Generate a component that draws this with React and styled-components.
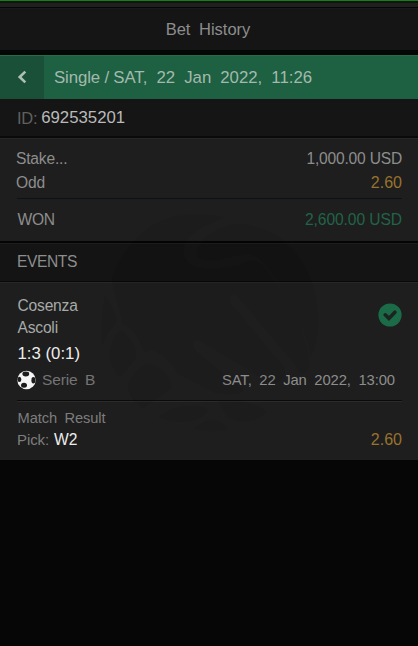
import React from "react";
import styled, { createGlobalStyle } from "styled-components";

const GlobalStyle = createGlobalStyle`
  * { box-sizing: border-box; }
  html, body { margin: 0; background: #070606; }
`;

const Page = styled.main`
  position: relative;
  display: flex;
  flex-direction: column;
  width: 100%;
  height: 646px;
  overflow: hidden;
  background: #070606;
  font-family: "Liberation Sans", Arial, sans-serif;
`;

const TopStrip = styled.div`
  flex: none;
  height: 8px;
  background: #1f1f1f;
  border-top: 1px solid #168016;
  border-bottom: 1px solid #060606;
  box-shadow: inset 0 2px 0 #111411;
`;

const Title = styled.header`
  flex: none;
  display: flex;
  justify-content: center;
  height: 47px;
  padding: 0 2px 1px 0;
  align-items: center;
  background: #151515;
  border-top: 1px solid #1a1a1a;
  border-bottom: 5px solid #040706;
`;

const Banner = styled.div`
  flex: none;
  display: flex;
  height: 44px;
  background: #1d6042;
  border-top: 1px solid #2b694e;
`;

const BackButton = styled.button`
  display: flex;
  align-items: center;
  justify-content: center;
  width: 44px;
  height: 43px;
  padding: 0 0 2px;
  border: 0;
  background: #1b5038;
`;

const BannerText = styled.div`
  display: flex;
  align-items: center;
  padding: 1px 0 0 10px;
`;

const IdBar = styled.div`
  flex: none;
  display: flex;
  align-items: center;
  gap: 4px;
  height: 39px;
  padding: 1px 17px 0;
  background: #151515;
  border-bottom: 2px solid #0a0a0a;
`;

const Card = styled.section`
  flex: none;
  height: ${(p) => p.$height}px;
  padding: 0 16px;
  background: #1e1e1e;
  border-top: 1px solid #282828;
`;

const SectionTitle = styled.div`
  flex: none;
  display: flex;
  align-items: center;
  height: 41px;
  padding: 0 17px;
  background: #141414;
  border-top: 2px solid #050505;
  border-bottom: 1px solid #080808;
  box-shadow: inset 0 1px 0 #1d1d1d;
`;

const Row = styled.div`
  display: flex;
  align-items: center;
  justify-content: space-between;
  height: ${(p) => p.$height}px;
  margin-top: ${(p) => p.$top || 0}px;
  padding-left: ${(p) => p.$inset || 0}px;
  padding-right: ${(p) => p.$right || 0}px;
`;

const Group = styled.div`
  display: flex;
  align-items: center;
  gap: ${(p) => p.$gap || 0}px;
`;

const StatusSlot = styled.div`
  display: flex;
  padding-bottom: 4px;
`;

const Rule = styled.hr`
  height: ${(p) => (p.$ridge ? 2 : 1)}px;
  margin: ${(p) => p.$top}px 0 0 1px;
  border: 0;
  background: ${(p) => (p.$ridge ? "linear-gradient(#0b0b0b 50%, #2b2b2b 50%)" : "#0d1119")};
`;

const Text = styled.span`
  color: ${(p) => p.$color || "#8d8d8d"};
  font-size: ${(p) => p.$size || 15.6}px;
  line-height: 20px;
  letter-spacing: ${(p) => p.$track || 0}px;
  word-spacing: ${(p) => p.$words || 0}px;
  white-space: pre;
`;

const Watermark = styled.svg`
  position: absolute;
  left: 100px;
  top: 212px;
  pointer-events: none;
`;

const Handshake = () => (
  <Watermark width="224" height="222" viewBox="100 212 224 222" aria-hidden="true">
    <g fill="#000" fillOpacity=".055">
      <path d="M111 279C123 245 151 216 187 215C201 214 214 215 224 217C209 225 182 233 184 253C186 272 213 270 239 265C248 260 257 256 265 268C288 294 306 329 310 365C305 376 301 376 296 366L238 297C231 291 227 300 233 306L284 367C288 378 278 386 268 382L200 341C193 337 190 346 197 352L244 390C239 397 225 394 215 393L178 374C171 360 153 345 145 352C139 346 139 330 123 325Z" />
      <path d="M234 224C278 222 316 260 318 315C319 333 316 348 311 357C302 318 280 280 257 257C241 249 220 266 200 259C189 250 208 229 234 224Z" />
      <path d="M105 295C113 309 118 316 116 323C109 331 102 340 103 349C100 330 102 311 105 295Z" />
      <path d="M121 330C131 337 138 348 136 357C132 365 124 372 120 378C103 358 109 341 121 330Z" />
      <path d="M145 364C158 364 169 374 172 387C162 396 151 403 143 408C126 397 119 382 145 364Z" />
      <path d="M158 417C172 407 186 403 206 408C211 411 203 417 195 420C182 423 168 422 158 417Z" />
      <path d="M218 401C235 398 258 403 267 412C258 422 241 424 228 418Z" />
      <path d="M194 429C205 418 218 416 228 429C217 432 205 432 194 429Z" />
    </g>
  </Watermark>
);

const ChevronLeft = () => (
  <svg width="12" height="14" viewBox="0 0 12 14" aria-hidden="true">
    <path d="M9.3 1.6 3.7 7l5.6 5.4" fill="none" stroke="#aebfb5" strokeWidth="2.6" />
  </svg>
);

const SoccerBall = () => (
  <svg width="19" height="20" viewBox="0 0 19 20" aria-hidden="true">
    <circle cx="9.5" cy="10" r="9.2" fill="#f5f5f5" />
    <g fill="#1c1c1c">
      <ellipse cx="8.8" cy="4" rx="3.4" ry="2.4" />
      <ellipse cx="2.4" cy="9.4" rx="1.9" ry="2.6" />
      <ellipse cx="16.4" cy="10.2" rx="2" ry="3.2" />
      <ellipse cx="7" cy="15.2" rx="3" ry="2.5" />
    </g>
  </svg>
);

const CheckBadge = () => (
  <svg width="24" height="24" viewBox="0 0 24 24" aria-hidden="true">
    <circle cx="12" cy="12" r="11.6" fill="#1b6b48" />
    <path d="m7.2 11.8 3.7 3.6 6-6.2" fill="none" stroke="#1b2420" strokeWidth="3.6" strokeLinecap="round" />
  </svg>
);

export default function App() {
  return (
    <>
      <GlobalStyle />
      <Page>
        <TopStrip />
        <Title>
          <Text $size={16.5} $words={4}>Bet History</Text>
        </Title>
        <Banner>
          <BackButton aria-label="Back"><ChevronLeft /></BackButton>
          <BannerText>
            <Group $gap={4}>
              <Text $size={16.8} $color="#a4b9ad" $track={-0.1}>Single /</Text>
              <Text $size={16.8} $color="#a4b9ad" $words={4.4}>SAT, 22 Jan 2022, 11:26</Text>
            </Group>
          </BannerText>
        </Banner>
        <IdBar>
          <Text $size={16.5} $color="#606060" $track={-0.3}>ID:</Text>
          <Text $size={16.8} $color="#bababa">692535201</Text>
        </IdBar>

        <Card $height={103}>
          <Row $height={20} $top={10}>
            <Text $track={-0.2}>Stake...</Text>
            <Text $track={-0.2}>1,000.00 USD</Text>
          </Row>
          <Row $height={20} $top={4}>
            <Text $track={-0.1}>Odd</Text>
            <Text $size={16} $color="#98722e">2.60</Text>
          </Row>
          <Rule $top={5} />
          <Row $height={20} $top={11} $inset={1.5}>
            <Text $track={-0.3}>WON</Text>
            <Text $track={-0.08} $color="#216448">2,600.00 USD</Text>
          </Row>
        </Card>

        <SectionTitle><Text $track={-0.4}>EVENTS</Text></SectionTitle>

        <Card $height={178}>
          <Row $height={44} $top={12} $inset={1.5}>
            <div>
              <Row $height={22}><Text $track={-0.2} $color="#a6aaa8">Cosenza</Text></Row>
              <Row $height={22}><Text $track={-0.2} $color="#a6aaa8">Ascoli</Text></Row>
            </div>
            <StatusSlot><CheckBadge /></StatusSlot>
          </Row>
          <Row $height={22} $top={4} $inset={1.5}>
            <Text $size={16.8} $color="#ededed">1:3 (0:1)</Text>
          </Row>
          <Row $height={22} $top={4} $inset={1} $right={7}>
            <Group $gap={6}>
              <SoccerBall />
              <Text $size={15.5} $color="#747474" $words={3.5} $track={-0.15}>Serie B</Text>
            </Group>
            <Text $size={14.8} $words={3.6} $track={-0.1}>SAT, 22 Jan 2022, 13:00</Text>
          </Row>
          <Rule $ridge $top={9} />
          <Row $height={20} $top={6} $inset={1.5}>
            <Text $size={14.7} $color="#7d7d7d" $words={3.5} $track={-0.1}>Match Result</Text>
          </Row>
          <Row $height={20} $top={2} $inset={1}>
            <Group $gap={5}>
              <Text $size={15} $color="#7d7d7d" $track={-0.1}>Pick:</Text>
              <Text $size={15.6} $color="#ededed">W2</Text>
            </Group>
            <Text $size={16} $color="#98722e">2.60</Text>
          </Row>
        </Card>
        <Handshake />
      </Page>
    </>
  );
}
